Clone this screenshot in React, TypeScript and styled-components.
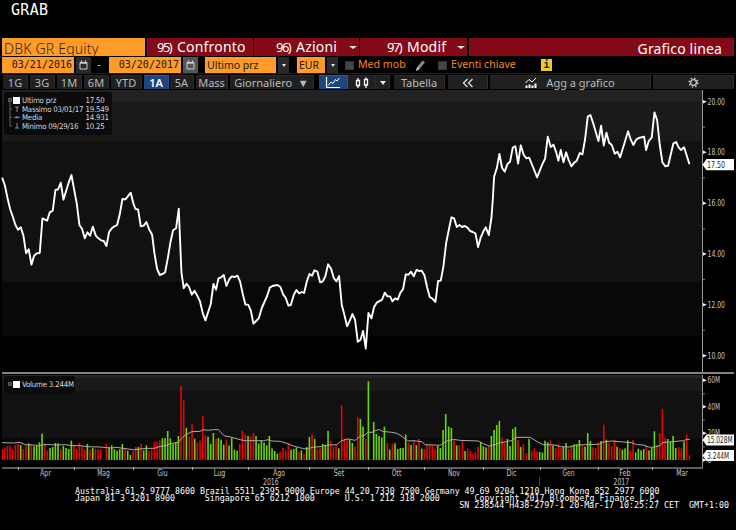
import React from "react";
import styled, { createGlobalStyle, css } from "styled-components";

const Global = createGlobalStyle`
  * { box-sizing: border-box; }
  html, body { margin: 0; background: #000; overflow: hidden; }
`;

const sans = `"Open Sans", "Noto Sans", sans-serif`;
const mono = `"DejaVu Sans Mono", monospace`;
const condensed = `"DejaVu Sans Condensed", "DejaVu Sans", sans-serif`;
const amber = "#ff9c2a";
const crimson = "#840a18";

const Screen = styled.div`
  width: 736px;
  height: 530px;
  background: #000;
  color: #fff;
  font-family: ${sans};
  display: flex;
  flex-direction: column;
`;

const Title = styled.div`
  height: 38px;
  padding: 1px 0 0 11px;
  font: 15px/19px ${mono};
  letter-spacing: 0.3px;
`;

const HeaderRow = styled.div`
  display: flex;
  height: 18px;
  margin: 0 2px;
  line-height: 18px;
  white-space: nowrap;
`;

const Security = styled.div`
  width: 143px;
  margin-right: 2px;
  padding: 1px 0 0 2px;
  background: ${amber};
  color: #37240c;
  font: 300 14px/19px "Noto Sans", sans-serif;
  letter-spacing: 0.2px;
`;

const MenuItem = styled.div<{ $w: number; $pad: number }>`
  display: flex;
  width: ${(p) => p.$w}px;
  margin-right: 1px;
  padding-left: ${(p) => p.$pad}px;
  background: ${crimson};
  font: 14px/18px "Noto Sans", sans-serif;
`;

const MenuNumber = styled.span`
  width: 20px;
  font-size: 13px;
  letter-spacing: -1.5px;
`;

const MenuLabel = styled.span`
  flex: 1;
  letter-spacing: 0.2px;
`;

const Caret = styled.i<{ $size?: number }>`
  width: 0;
  height: 0;
  border: ${(p) => p.$size ?? 3}px solid transparent;
  border-top: ${(p) => (p.$size ?? 3) + 1}px solid #e8e8e8;
  border-bottom: 0;
`;

const MenuCaret = styled(Caret)`
  margin: 8px 2px 0 0;
  border-width: 3px 4px 0;
`;

const ViewName = styled.div`
  flex: 1;
  margin-left: 1px;
  padding: 1px 12px 0 0;
  background: ${crimson};
  text-align: right;
  font: 14px/19px "Noto Sans", sans-serif;
  letter-spacing: 0.15px;
`;

const FieldRow = styled.div`
  display: flex;
  height: 16px;
  margin: 1px 2px 0;
  align-items: stretch;
  white-space: nowrap;
`;

const Field = styled.div<{ $w: number; $date?: boolean }>`
  width: ${(p) => p.$w}px;
  background: ${amber};
  color: #21170a;
  padding-left: 2px;
  font: 10.5px/16px "Noto Sans", sans-serif;
  ${(p) =>
    p.$date &&
    css`
      padding: 0 2px 0 0;
      text-align: right;
      font: 10px/16px ${mono};
    `}
`;

const SquareButton = styled.div<{ $w: number; $after: number; $light?: boolean }>`
  display: flex;
  align-items: center;
  justify-content: center;
  width: ${(p) => p.$w}px;
  margin: 0 ${(p) => p.$after}px 0 2px;
  background: ${(p) => (p.$light ? "#555" : "#2b2b2b")};
`;

const Dash = styled.span`
  width: 18px;
  padding-left: 6px;
  color: ${amber};
  font: 12px/16px "Noto Sans", sans-serif;
`;

const Check = styled.i`
  width: 9px;
  height: 9px;
  margin-top: 4px;
  background: #454545;
  border: 1px solid #353535;
`;

const OptionText = styled.span<{ $w: number }>`
  width: ${(p) => p.$w}px;
  margin-left: 4px;
  color: #f58a12;
  font: 10.6px/14px "Noto Sans", sans-serif;
`;

const PencilSlot = styled.span`
  width: 23px;
`;

const Info = styled.span`
  width: 11px;
  height: 12px;
  margin-top: 2px;
  background: #eacb20;
  color: #221d00;
  text-align: center;
  font: bold 10px/12px ${mono};
`;

const ToolRow = styled.div`
  display: flex;
  height: 17px;
  padding: 1px 2px 1px 3px;
  border-top: 1px solid #222;
  white-space: nowrap;
`;

const Tool = styled.div<{ $w: number; $gap?: number; $on?: boolean }>`
  display: flex;
  align-items: center;
  justify-content: center;
  flex: none;
  width: ${(p) => p.$w}px;
  height: 14px;
  margin-right: ${(p) => p.$gap ?? 2}px;
  background: ${(p) => (p.$on ? "#1d477c" : "#202020")};
  border-right: 1px solid ${(p) => (p.$on ? "#2c5a94" : "#2e2e2e")};
  border-top: 1px solid ${(p) => (p.$on ? "#2c5a94" : "#2a2a2a")};
  color: ${(p) => (p.$on ? "#fff" : "#b9b9b9")};
  font: ${(p) => (p.$on ? 600 : 400)} 11px/13px "Noto Sans", sans-serif;
`;

const GraphLabel = styled.span`
  margin-left: 9px;
`;

const ChartArea = styled.div`
  position: relative;
  height: 397px;
`;

const Plot = styled.svg`
  display: block;
  font-family: ${condensed};
  font-stretch: condensed;
  font-size: 8px;
`;

const Legend = styled.div<{ $top: number; $w: number; $h: number }>`
  position: absolute;
  left: 4px;
  top: ${(p) => p.$top}px;
  width: ${(p) => p.$w}px;
  height: ${(p) => p.$h}px;
  padding: 4px 0 0 4px;
  border-radius: 2px;
  background: #0b0b0b;
`;

const LegendRow = styled.div`
  display: grid;
  grid-template-columns: 14px 63.5px 1fr;
  height: 8.7px;
  color: #d8d8d8;
  font: 7.8px/9px ${condensed};
  font-stretch: condensed;
  letter-spacing: -0.2px;
  white-space: nowrap;
`;

const Footer = styled.pre`
  margin: 0;
  padding: 1px 7px 0 75px;
  font: 8.305px/7px ${mono};
  color: #fff;
`;

const FooterRight = styled.div`
  text-align: right;
`;

/* Samples are stored on a grid three times finer than the drawing, per segment origin. */
type Segment = [number, number, string];

const priceSegments: Segment[] = [
  [0, 165, "6,38 14,60 22,98 30,132 38,155 46,180 54,194 62,187 70,212 78,265 86,253 94,299 102,272 110,265 119,264 127,160 141,167 149,142 158,137 166,75 174,73 182,53 190,104 206,52 214,30 222,73 230,116 238,180 246,192 254,220 262,202 270,212 278,185 287,212 295,220 303,226 311,228 319,243 327,201 335,190 343,184 351,180 359,148 367,102 376,103 392,83 400,116 406,132 414,133 422,184 431,182 439,171 447,193 456,209 463,265 471,312 479,330 487,327 495,322 503,280 511,232 519,196 528,190 536,131 544,322"],
  [170, 240, "41,145 49,131 57,141 65,164 73,152 82,168 90,185 98,220 106,241 122,192 130,132 138,149 145,115 153,112 161,105 169,138 178,117 185,109 194,111 202,107 210,125 218,162 226,194 234,194 242,211 250,251 258,243 266,235 275,204 283,186 291,168 299,143 307,138 322,135 331,141 339,163 347,174 355,197 362,195 371,165 379,150 387,160 395,156 402,159 410,125 418,102 426,107 433,91 442,95 450,127 458,124 466,108 474,73 483,86 491,114 499,124 507,108 515,195 523,225 531,259 539,242 547,222 555,240 563,305 571,300 579,273"],
  [350, 200, "47,446 55,339 64,355 72,321 80,308 96,299 104,278 112,289 120,289 127,304 135,295 143,299 151,278 159,267 167,223 175,224 183,215 191,229 199,210 208,213 215,212 223,226 231,262 239,291 247,296 256,306 264,243 272,242 280,199 288,130 296,90 304,52 312,55 320,81 328,75 336,81 344,78 352,83 360,93 368,96 376,100 384,141 392,112 400,94 407,82 416,105 424,54"],
  [480, 95, "38,315 42,245 50,220 58,177 66,219 74,230 82,207 90,200 98,158 106,154 114,206 122,151 131,180 139,190 147,188 155,207 171,247 179,227 187,207 195,191 203,125 212,156 220,149 228,171 235,197 242,165 250,202 258,172 266,196 274,214 282,203 290,197 299,174 307,178 315,132 323,65 331,60 339,84 355,138 363,92 371,152 379,113 387,143 395,150 404,176 412,170 420,187 444,109 452,134 460,150 468,134 476,129 492,125 498,165 506,138 515,127 523,52 531,75 539,150 547,202 556,214 564,212 580,145 588,141 596,158 603,165 612,157 620,182 628,208"],
];

const averageSegments: Segment[] = [
  [0, 365, "6,233 40,234 60,232 75,239 100,240 116,242 130,239 150,239 170,240 195,239 215,242 240,242 260,245 300,246 320,248 335,249 350,247 375,251 400,254 420,252 440,250 463,250 480,244 495,243 510,236 535,232 545,220 555,210 575,200 600,199 608,194 625,196 640,194 655,194 672,212 695,217 720,224 735,227"],
  [245, 365, "55,227 70,224 80,228 105,229 125,235 145,243 175,251 190,252 200,247 225,245 240,241 275,239 290,227 310,222 330,226 345,214 360,210 370,200 378,203 390,197 403,194 412,199 440,202 455,205 472,215 488,228 505,227 530,230 540,239 585,241 605,228 625,223 645,226 700,228 715,236 732,243"],
  [490, 365, "0,243 15,239 30,233 50,230 68,226 76,217 120,217 140,229 158,239 195,240 210,245 240,246 255,241 285,239 325,238 340,231 365,228 400,231 425,233 440,239 460,240 475,246 490,247 510,242 517,233 535,231 560,229 580,227 590,223 600,223"],
];

const volumeSegments: Segment[] = [
  [0, 365, "r8,252 r14,247 r22,244 r30,242 r38,254 r46,240 r54,237 g62,240 r70,252 r78,241 g86,235 r94,239 g102,244 g110,243 g118,232 g126,206 r134,235 r142,257 g150,249 g158,246 g166,234 g174,235 r182,253 g190,243 g198,249 g206,252 g214,227 r222,239 r230,252 r238,233 r246,244 r254,254 g262,237 r270,253 g278,249 r286,251 r294,253 r302,254 r311,283 r319,237 g327,247 g335,241 g343,253 g351,257 g359,253 g367,237 r375,250 g383,257 g391,270 r399,257 r407,246 g415,246 r423,237 g431,256 g439,241 r447,257 r455,254 r463,231 r471,231 r479,227 g487,220 g495,219 g503,198 g511,220 g519,237 g527,232 g535,213 r543,63 r551,106 g559,189 r568,215 r576,177 g584,221 r592,233 r600,227 r608,154 r616,211 g624,215 g632,237 g640,204 r648,222 g655,219 g663,224 g671,239 r679,224 g687,242 g695,218 g703,254 g711,257 r719,237 r727,197"],
  [245, 365, "r1,208 g9,213 r17,215 r25,204 g33,213 g41,236 g49,228 g57,232 g65,241 g73,213 g81,250 g89,258 g97,266 r105,261 r114,249 r122,257 r130,234 g138,254 g146,252 g154,247 r162,261 g169,256 r177,267 g185,246 g193,216 r201,208 g209,222 r217,251 r225,247 g233,237 g241,240 g249,198 r257,228 r265,245 r273,240 g281,250 r290,121 r298,221 r306,220 g314,223 g322,234 r330,245 r338,157 g346,162 g354,185 r362,222 g370,49 r378,283 g386,171 g394,207 g402,213 g410,217 g418,185 r427,234 g434,254 r442,237 g450,235 g458,252 g466,249 g474,249 g482,209 r490,234 g498,240 r506,226 g514,241 r522,222 g530,251 r538,252 r546,240 r554,240 r562,243 r570,251 g578,243 g586,249 g594,195 g602,147 g611,185 g619,189 r627,225 g635,241 r643,240 r652,228 g660,258 r668,251 r676,258 r684,267 r691,261 r699,246 g707,231 g715,244 g723,247 r731,243"],
  [490, 365, "g4,213 g12,195 g20,180 g28,168 r36,218 r44,233 g52,222 g60,243 g68,192 g76,186 r84,225 g92,246 r100,238 r109,264 g117,222 r125,258 r133,250 r141,259 g149,261 g157,263 g165,227 g173,232 r181,226 g189,241 r197,249 r205,237 r213,249 g220,246 g228,234 r236,252 r244,240 g252,238 g260,238 g268,225 r277,241 g285,245 g293,204 g301,228 r309,247 r317,249 r325,232 g333,228 r341,179 g349,224 r357,233 r365,244 r373,224 g381,245 r389,250 g397,254 g405,250 g413,226 r421,256 r429,225 g437,262 g445,251 g453,256 g461,252 r469,241 g477,256 g485,249 g493,199 r501,239 r509,204 r517,132 r525,219 g533,222 g541,231 g549,213 g557,249 r566,246 r574,250 g582,229 r590,208 r598,271"],
];

const toPoints = (segments: Segment[]) =>
  segments
    .flatMap(([ox, oy, text]) =>
      text.split(" ").map((pair) => {
        const [x, y] = pair.split(",").map(Number);
        return `${(ox + x / 3 + 0.1).toFixed(2)},${(oy + y / 3).toFixed(2)}`;
      })
    )
    .join(" ");

const bars = volumeSegments.flatMap(([ox, oy, text]) =>
  text.split(" ").map((item) => {
    const [x, y] = item.slice(1).split(",").map(Number);
    return { up: item[0] === "g", x: ox + x / 3, y: oy + y / 3 };
  })
);

const months: [string, number, number][] = [
  ["Apr", 45.5, 11], ["Mag", 103.5, 12.5], ["Giu", 162.5, 10.5], ["Lug", 219.5, 11.5],
  ["Ago", 279, 12], ["Set", 339, 10.5], ["Ott", 396.5, 9.5], ["Nov", 454, 12],
  ["Dic", 511.5, 10], ["Gen", 568.5, 12], ["Feb", 625, 11.5], ["Mar", 682, 11.5],
];
const monthTicks = [18.5, 74.5, 133.5, 192.5, 248.5, 309.5, 368.5, 424.5, 483.5, 540.5, 598.5, 652.5];
const prices: [string, number][] = [
  ["20.00", 101.7], ["18.00", 152.3], ["16.00", 203.3], ["14.00", 254], ["12.00", 304.7], ["10.00", 355.7],
];
const volumes: [string, number][] = [["60M", 380.3], ["40M", 406.7], ["20M", 433.3], ["0", 460]];

function Tag({ y, text, w }: { y: number; text: string; w: number }) {
  return (
    <g>
      <path d={`M702.5 ${y}l4-5.6H734v11.2H706.5z`} fill="#fff" />
      <text x={707} y={y + 3} textLength={w} lengthAdjust="spacingAndGlyphs" fill="#222">{text}</text>
    </g>
  );
}

function Chart() {
  return (
    <Plot width="736" height="397" viewBox="0 90 736 397">
      <g shapeRendering="crispEdges">
        <rect x="2" y="90" width="700" height="12" fill="#222" />
        <rect x="2" y="102" width="700" height="39" fill="#1a1a1a" />
        <rect x="2" y="141" width="700" height="141" fill="#111" />
        <rect x="2" y="282" width="700" height="54" fill="#080808" />
        <rect x="2" y="375" width="700" height="3" fill="#242424" />
        <rect x="2" y="378" width="700" height="13" fill="#1a1a1a" />
        <rect x="2" y="391" width="700" height="47" fill="#111" />
        <rect x="2" y="438" width="700" height="18" fill="#090909" />
        <rect x="702" y="90" width="1" height="282" fill="#999" />
        <rect x="702" y="375" width="1" height="93" fill="#999" />
        <rect x="2" y="372" width="732" height="2" fill="#858585" />
        <rect x="2" y="467" width="701" height="2" fill="#5d5d5d" />
        {monthTicks.map((x) => (
          <rect key={x} x={x - 0.5} y="467" width="1" height="3" fill="#aaa" />
        ))}
        <rect x="539" y="477" width="1" height="9" fill="#444" />
      </g>
      {bars.map((b, i) => (
        <rect key={i} x={b.x - 0.75} y={b.y} width="1.6" height={460 - b.y} fill={b.up ? "#6cd40c" : "#e60505"} />
      ))}
      <polyline points={toPoints(averageSegments)} fill="none" stroke="#aaa" strokeWidth="1" />
      <polyline points={toPoints(priceSegments)} fill="none" stroke="#fff" strokeWidth="1.9" strokeLinejoin="round" />
      <g fill="#c6c6c6">
        {prices.map(([t, y]) => (
          <g key={t}>
            <path d={`M703 ${y - 1.8}l3.8 1.8-3.8 1.8z`} fill="#eee" />
            {t !== "10.00" && <rect x="703" y={y + 25} width="2" height="1" fill="#777" />}
            <text x="707.5" y={y + 3} textLength="17.5" lengthAdjust="spacingAndGlyphs">{t}</text>
          </g>
        ))}
        {volumes.map(([t, y]) => (
          <g key={t}>
            <path d={`M703 ${y - 1.8}l3.8 1.8-3.8 1.8z`} fill="#eee" />
            {t !== "0" && <rect x="703" y={y + 13} width="2" height="1" fill="#777" />}
            <text x="707.5" y={y + 3} textLength={t === "0" ? 4 : 12.5} lengthAdjust="spacingAndGlyphs">{t}</text>
          </g>
        ))}
        <Tag y={164.7} text="17.50" w={18} />
        <Tag y={440} text="15.028M" w={25.7} />
        <Tag y={455.5} text="3.244M" w={22} />
        {months.map(([t, x, w]) => (
          <text key={t} x={x - w / 2} y="476" textLength={w} lengthAdjust="spacingAndGlyphs">{t}</text>
        ))}
        <text x="263" y="484.7" textLength="15.5" lengthAdjust="spacingAndGlyphs">2016</text>
        <text x="613.5" y="484.7" textLength="15.5" lengthAdjust="spacingAndGlyphs">2017</text>
      </g>
    </Plot>
  );
}

const Calendar = () => (
  <svg width="9" height="10" viewBox="0 0 9 10" fill="none" stroke="#ccc">
    <path d="M1 2.5h7v6.5H1z" />
    <path d="M1 3h7M2.5.5v2M6.5.5v2" strokeWidth="1.3" />
  </svg>
);

const Pencil = () => (
  <svg width="12" height="16" viewBox="0 0 12 16">
    <path d="M1 13l1.2-4L7.5 2.5 10 4.2 4.5 11z" fill="#8a8a8a" />
    <path d="M1 13l1.2-4 2.3 2z" fill="#ccc" />
  </svg>
);

const LineIcon = () => (
  <svg width="16" height="12" viewBox="0 0 16 12" fill="none" stroke="#fff">
    <path d="M1.5 0v10.5H15" strokeWidth="1.2" />
    <path d="M3 8.5l3-3.5 2 1.5 2.5-4 1.5 1.5L14.5 1" />
  </svg>
);

const CandleIcon = () => (
  <svg width="14" height="12" viewBox="0 0 14 12" fill="none" stroke="#fff" strokeWidth="1.3">
    <path d="M1.5 3.5h3v5h-3zM3 1v2.5M3 8.5V11M9.5 2.5h3v5.5h-3zM11 .5v2M11 8v3" />
  </svg>
);

const BarsIcon = () => (
  <svg width="12" height="12" viewBox="0 0 12 12">
    <path d="M.5 6L4 2.5 7 5l4-4" fill="none" stroke="#fff" />
    <path d="M.5 8.5h2V11h-2zM3.5 7.5h2V11h-2zM6.5 8.5h2V11h-2zM9.5 6.5h2V11h-2z" fill="#fff" />
  </svg>
);

const ChevronsIcon = () => (
  <svg width="12" height="10" viewBox="0 0 12 10" fill="none" stroke="#ddd" strokeWidth="1.4">
    <path d="M5.5 1L1.5 5l4 4M10.5 1l-4 4 4 4" />
  </svg>
);

const GearIcon = () => (
  <svg width="11" height="11" viewBox="0 0 11 11" fill="none" stroke="#d0d0d0">
    <circle cx="5.5" cy="5.5" r="2.9" strokeWidth="1.3" />
    <circle cx="5.5" cy="5.5" r="4.4" strokeWidth="1.4" strokeDasharray="1.5 1.955" />
  </svg>
);

const TreeGlyphs = ({ rows }: { rows: boolean }) => (
  <svg width="14" height="9" viewBox="0 0 14 9" fill="none" stroke="#777" overflow="visible">
    <path d="M.5 2.5h3v3h-3zM1 4h2" strokeWidth=".8" />
    <path d="M5 1h7v7H5z" fill="#fff" stroke="none" />
    {rows && (
      <g strokeWidth=".8">
        <path d="M2 6v24h2M2 13h2M2 21.3h2" />
        <path d="M7 11h4M9 11v5M6 21.3h6M9 20v2.6M9 27v5M7 32h4" stroke="#aaa" />
      </g>
    )}
  </svg>
);

const legendRows: [string, string][] = [
  ["Ultimo prz", "17.50"],
  ["Massimo 03/01/17", "19.549"],
  ["Media", "14.931"],
  ["Minimo 09/29/16", "10.25"],
];

export default function App() {
  return (
    <Screen>
      <Global />
      <Title>GRAB</Title>
      <HeaderRow>
        <Security>DBK GR Equity</Security>
        <MenuItem $w={106} $pad={10}>
          <MenuNumber>95)</MenuNumber>
          <MenuLabel>Confronto</MenuLabel>
        </MenuItem>
        <MenuItem $w={105} $pad={22}>
          <MenuNumber>96)</MenuNumber>
          <MenuLabel>Azioni</MenuLabel>
          <MenuCaret />
        </MenuItem>
        <MenuItem $w={107} $pad={27}>
          <MenuNumber>97)</MenuNumber>
          <MenuLabel>Modif</MenuLabel>
          <MenuCaret />
        </MenuItem>
        <ViewName>Grafico linea</ViewName>
      </HeaderRow>
      <FieldRow>
        <Field $w={72} $date>03/21/2016</Field>
        <SquareButton $w={15} $after={0}><Calendar /></SquareButton>
        <Dash>-</Dash>
        <Field $w={72} $date>03/20/2017</Field>
        <SquareButton $w={15} $after={7} $light><Calendar /></SquareButton>
        <Field $w={71}>Ultimo prz</Field>
        <SquareButton $w={11} $after={8}><Caret $size={2} /></SquareButton>
        <Field $w={28}>EUR</Field>
        <SquareButton $w={11} $after={7}><Caret $size={2} /></SquareButton>
        <Check />
        <OptionText $w={57}>Med mob</OptionText>
        <PencilSlot><Pencil /></PencilSlot>
        <Check />
        <OptionText $w={90}>Eventi chiave</OptionText>
        <Info>i</Info>
      </FieldRow>
      <ToolRow>
        <Tool $w={25}>1G</Tool>
        <Tool $w={25}>3G</Tool>
        <Tool $w={25}>1M</Tool>
        <Tool $w={25}>6M</Tool>
        <Tool $w={31}>YTD</Tool>
        <Tool $w={25} $gap={1} $on>1A</Tool>
        <Tool $w={24}>5A</Tool>
        <Tool $w={32}>Mass</Tool>
        <Tool $w={84} $gap={5}>Giornaliero&nbsp; ▼</Tool>
        <Tool $w={29} $gap={0} $on><LineIcon /></Tool>
        <Tool $w={28} $gap={0}><CandleIcon /></Tool>
        <Tool $w={14} $gap={4}><Caret /></Tool>
        <Tool $w={51} $gap={3}>Tabella</Tool>
        <Tool $w={40}><ChevronsIcon /></Tool>
        <Tool $w={161}><BarsIcon /><GraphLabel>Agg a grafico</GraphLabel></Tool>
        <Tool $w={81} $gap={0}><GearIcon /></Tool>
      </ToolRow>
      <ChartArea>
        <Chart />
        <Legend $top={2} $w={108} $h={43}>
          {legendRows.map(([name, value], i) => (
            <LegendRow key={name}>
              <span>{i === 0 && <TreeGlyphs rows />}</span>
              <span>{name}</span>
              <span>{value}</span>
            </LegendRow>
          ))}
        </Legend>
        <Legend $top={286} $w={71} $h={17}>
          <LegendRow>
            <span><TreeGlyphs rows={false} /></span>
            <span>Volume 3.244M</span>
          </LegendRow>
        </Legend>
      </ChartArea>
      <Footer>
        {"Australia 61 2 9777 8600 Brazil 5511 2395 9000 Europe 44 20 7330 7500 Germany 49 69 9204 1210 Hong Kong 852 2977 6000\n"}
        {"Japan 81 3 3201 8900      Singapore 65 6212 1000      U.S. 1 212 318 2000       Copyright 2017 Bloomberg Finance L.P."}
        <FooterRight>{"SN 238544 H438-2797-1 20-Mar-17 10:25:27 CET  GMT+1:00"}</FooterRight>
      </Footer>
    </Screen>
  );
}
